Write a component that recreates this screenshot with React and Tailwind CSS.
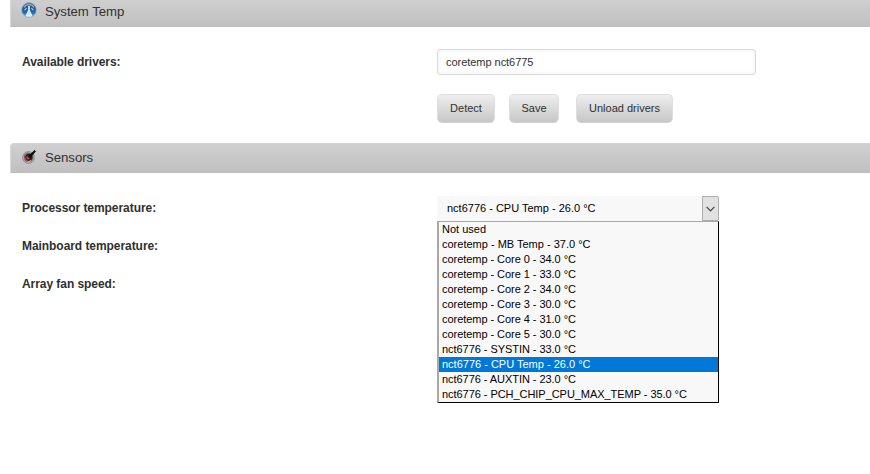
import React from "react";

const options = [
  { text: "Not used" },
  { text: "coretemp - MB Temp - 37.0 °C" },
  { text: "coretemp - Core 0 - 34.0 °C", tight: true },
  { text: "coretemp - Core 1 - 33.0 °C", tight: true },
  { text: "coretemp - Core 2 - 34.0 °C", tight: true },
  { text: "coretemp - Core 3 - 30.0 °C", tight: true },
  { text: "coretemp - Core 4 - 31.0 °C", tight: true },
  { text: "coretemp - Core 5 - 30.0 °C", tight: true },
  { text: "nct6776 - SYSTIN - 33.0 °C", tight: true },
  { text: "nct6776 - CPU Temp - 26.0 °C" },
  { text: "nct6776 - AUXTIN - 23.0 °C", tight: true },
  { text: "nct6776 - PCH_CHIP_CPU_MAX_TEMP - 35.0 °C", tight: true },
];
const selected = "nct6776 - CPU Temp - 26.0 °C";

function TempIcon() {
  return (
    <svg className="relative -top-[2px] block h-4 w-4" viewBox="0 0 16 16">
      <defs>
        <linearGradient id="orb" x1="0" y1="0" x2="0" y2="1">
          <stop offset="0" stopColor="#5b6b7e" />
          <stop offset="0.3" stopColor="#2f5480" />
          <stop offset="0.7" stopColor="#1f6cbd" />
          <stop offset="1" stopColor="#79c8f2" />
        </linearGradient>
      </defs>
      <circle cx="8" cy="8" r="7.4" fill="url(#orb)" stroke="#a3b1c0" strokeWidth="0.9" />
      <path d="M3 5.4C4.2 3.4 5.8 2.6 8 2.6s3.8.8 5 2.8" fill="none" stroke="#8fb2d4" strokeWidth="1.3" />
      <path d="M3.600 8.200 5.600 6.200M12.400 8.200 10.400 6.200" stroke="#a4cbed" strokeWidth="1.2" />
      <path d="M7.200 4h1.600v4l1 2.200 1.600 3.300-1.400 1.200H6l-1.400-1.200 1.600-3.300 1-2.200z" fill="#dff1fc" />
      <path d="M8 9.500v4" stroke="#a9d6f3" strokeWidth="1" />
    </svg>
  );
}

function SensorIcon() {
  return (
    <svg className="relative -top-px block h-4 w-4" viewBox="0 0 16 16">
      <circle cx="7.500" cy="8.500" r="5.900" fill="#a9a8a6" stroke="#8a8a88" strokeWidth="0.900" />
      <circle cx="7.500" cy="8.500" r="4.500" fill="#5a5656" />
      <circle cx="7.800" cy="8.200" r="3.500" fill="#252223" />
      <path d="M3.600 7a4.300 4.300 0 0 1 3.900-3" fill="none" stroke="#77777a" strokeWidth="1.100" />
      <path d="M3.600 8.500a4 4 0 0 0 2.200 3.600" fill="none" stroke="#c14b83" strokeWidth="1.400" />
      <path d="M6.300 12.500a4 4 0 0 0 3.800-1" fill="none" stroke="#d5a76d" strokeWidth="1.100" />
      <circle cx="7" cy="8.800" r="1.700" fill="#e83232" />
      <path d="M7.400 7.400 13.600 1.400l.9.900-4.300 5.200-2 1.200z" fill="#0d0d0d" stroke="#0d0d0d" strokeWidth="0.900" />
    </svg>
  );
}

function TitleBar({ icon, children }) {
  return (
    <div className="ml-[10px] flex h-[30px] items-center rounded-tl-[4px] border border-r-0 border-t-[#d3d3d3] border-l-[#d8d8d8] border-b-[#bdbdbd] bg-linear-to-b from-[#d0d0d0] to-[#c0c0c0] pl-[10px] text-[13.2px] text-[#303030]">
      {icon}
      <span className="ml-2 tracking-[-0.03px]">{children}</span>
    </div>
  );
}

function Button({ className, children }) {
  return (
    <button
      className={
        "h-[29px] rounded-[5px] border border-[#dedede] border-b-[#d2d2d2] bg-linear-to-b from-[#eeeeee] to-[#c7c7c7] text-[11px] text-[#303030] " +
        className
      }
    >
      {children}
    </button>
  );
}

function Row({ label, children }) {
  return (
    <div className="flex h-[38px] items-start">
      <div className="w-[415px] shrink-0 text-xs leading-[26px] font-bold tracking-[-0.06px] text-[#303030]">
        {label}
      </div>
      {children}
    </div>
  );
}

export default function App() {
  return (
    <div className="h-[474px] w-[870px] overflow-hidden bg-white font-['Liberation_Sans',Arial,sans-serif]">
      <div className="-mt-[3px]">
        <TitleBar icon={<TempIcon />}>System Temp</TitleBar>
      </div>
      <div className="pt-[22px] pl-[22px]">
        <Row label="Available drivers:">
          <input
            readOnly
            value="coretemp nct6775"
            className="h-[26px] w-[319px] rounded-[3px] border border-[#d9d9d9] bg-white px-2 text-[11px] tracking-[-0.04px] text-[#303030] shadow-[inset_0_0_4px_#eeeeee] outline-none"
          />
        </Row>
        <div className="mt-[7px] ml-[415px] flex">
          <Button className="w-[58px]">Detect</Button>
          <Button className="ml-[14px] w-[50px]">Save</Button>
          <Button className="ml-[17px] w-[97px]">Unload drivers</Button>
        </div>
      </div>
      <div className="mt-5">
        <TitleBar icon={<SensorIcon />}>Sensors</TitleBar>
      </div>
      <div className="pt-[22px] pl-[22px]">
        <Row label="Processor temperature:">
          <div className="relative mt-px w-[282px]">
            <div className="flex h-[25px] w-full items-center justify-between rounded-[3px] bg-[#f8f8f8] pl-[10px] text-[11px] text-black">
              <span>{selected}</span>
              <span className="flex h-[25px] w-[17px] items-center justify-center rounded-r-[2px] border border-[#adadad] bg-[#e1e1e1]">
                <svg className="h-[6px] w-[9px]" viewBox="0 0 9 6" fill="none" stroke="#444" strokeWidth="1.2">
                  <path d="m.6.9 3.900 3.900L8.400.9" />
                </svg>
              </span>
            </div>
            <ul className="absolute top-[25px] left-0 w-[282px] border-t border-r border-b border-l-2 border-t-[#a9a9a9] border-r-black border-b-black border-l-[#a9a9a9] bg-[#f8f8f8] text-[11px] leading-[15px] text-black">
              {options.map(({ text, tight }) => (
                <li
                  key={text}
                  className={
                    "h-[15px] pl-[3px] whitespace-nowrap " +
                    (tight ? "tracking-[-0.05px] " : "") +
                    (text === selected ? "bg-[#0078d7] text-white" : "")
                  }
                >
                  {text}
                </li>
              ))}
            </ul>
          </div>
        </Row>
        <Row label="Mainboard temperature:" />
        <Row label="Array fan speed:" />
      </div>
    </div>
  );
}
